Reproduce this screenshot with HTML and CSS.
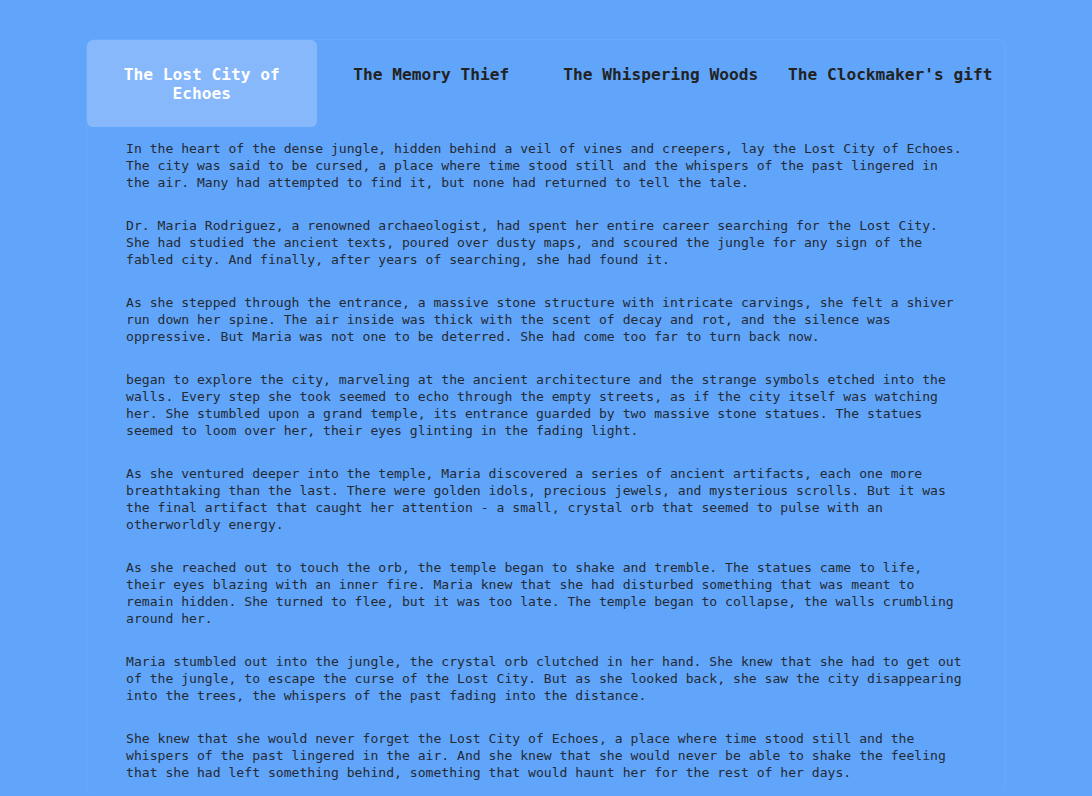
FILE: index.html
```html
<!DOCTYPE html>
<html lang="en">
<head>
<meta charset="utf-8">
<title>Stories</title>
<link rel="stylesheet" href="styles.css">
</head>
<body>
<div class="book">
  <nav class="tabs">
    <div class="tab tab-active">The Lost City of Echoes</div>
    <div class="tab">The Memory Thief</div>
    <div class="tab">The Whispering Woods</div>
    <div class="tab">The Clockmaker's gift</div>
  </nav>
  <div class="story">
    <p>In the heart of the dense jungle, hidden behind a veil of vines and creepers, lay the Lost City of Echoes. The city was said to be cursed, a place where time stood still and the whispers of the past lingered in the air. Many had attempted to find it, but none had returned to tell the tale.</p>
    <p>Dr. Maria Rodriguez, a renowned archaeologist, had spent her entire career searching for the Lost City. She had studied the ancient texts, poured over dusty maps, and scoured the jungle for any sign of the fabled city. And finally, after years of searching, she had found it.</p>
    <p>As she stepped through the entrance, a massive stone structure with intricate carvings, she felt a shiver run down her spine. The air inside was thick with the scent of decay and rot, and the silence was oppressive. But Maria was not one to be deterred. She had come too far to turn back now.</p>
    <p>began to explore the city, marveling at the ancient architecture and the strange symbols etched into the walls. Every step she took seemed to echo through the empty streets, as if the city itself was watching her. She stumbled upon a grand temple, its entrance guarded by two massive stone statues. The statues seemed to loom over her, their eyes glinting in the fading light.</p>
    <p>As she ventured deeper into the temple, Maria discovered a series of ancient artifacts, each one more breathtaking than the last. There were golden idols, precious jewels, and mysterious scrolls. But it was the final artifact that caught her attention - a small, crystal orb that seemed to pulse with an otherworldly energy.</p>
    <p>As she reached out to touch the orb, the temple began to shake and tremble. The statues came to life, their eyes blazing with an inner fire. Maria knew that she had disturbed something that was meant to remain hidden. She turned to flee, but it was too late. The temple began to collapse, the walls crumbling around her.</p>
    <p>Maria stumbled out into the jungle, the crystal orb clutched in her hand. She knew that she had to get out of the jungle, to escape the curse of the Lost City. But as she looked back, she saw the city disappearing into the trees, the whispers of the past fading into the distance.</p>
    <p>She knew that she would never forget the Lost City of Echoes, a place where time stood still and the whispers of the past lingered in the air. And she knew that she would never be able to shake the feeling that she had left something behind, something that would haunt her for the rest of her days.</p>
  </div>
</div>
</body>
</html>
```

FILE: styles.css
```css
html, body {
  margin: 0;
  padding: 0;
  background: #60a5fa;
}

body {
  font-family: "DejaVu Sans Mono", "Liberation Mono", monospace;
  overflow: hidden;
}

.book {
  width: 918px;
  margin: 40px auto 0;
  border-radius: 8px;
  box-shadow: 0 0 0 1px rgba(255, 255, 255, 0.06);
}

.tabs {
  display: grid;
  grid-template-columns: repeat(4, 1fr);
}

.tab {
  padding: 25px 12px 24px;
  font-size: 16.2px;
  font-weight: bold;
  line-height: 19.2px;
  text-align: center;
  color: #222222;
  border-radius: 6px;
}

.tab-active {
  background: #86b8fb;
  color: #ffffff;
}

.story {
  display: flex;
  flex-direction: column;
  padding: 0 39px;
}

.story p {
  margin: 13px 0;
  font-size: 13.1px;
  line-height: 17px;
  color: #252a33;
}
```
